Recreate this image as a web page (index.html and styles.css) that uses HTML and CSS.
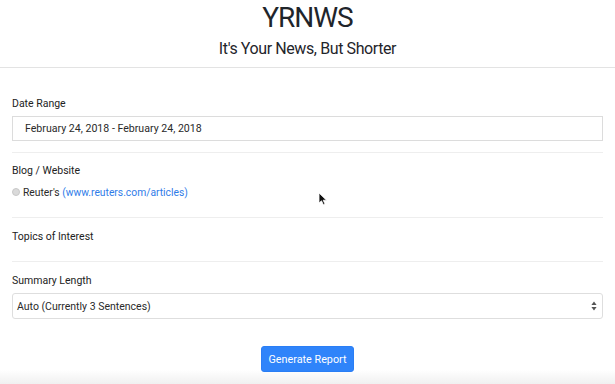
FILE: index.html
```html
<!DOCTYPE html>
<html lang="en">
<head>
    <meta charset="UTF-8">
    <meta name="viewport" content="width=device-width, initial-scale=1.0">
    <title>YRNWS</title>
    <link rel="stylesheet" href="styles.css">
</head>
<body>
    <header class="site-header">
        <h1>YRNWS</h1>
        <p class="tagline">It's Your News, But Shorter</p>
    </header>

    <form class="report-form">
        <div class="field">
            <label class="field-label">Date Range</label>
            <div class="text-input">February 24, 2018 - February 24, 2018</div>
        </div>

        <div class="field field-source">
            <label class="field-label">Blog / Website</label>
            <div class="radio-row">
                <span class="radio"></span>
                <span>Reuter's <a href="#">(www.reuters.com/articles)</a></span>
            </div>
        </div>

        <div class="field field-topics">
            <label class="field-label">Topics of Interest</label>
        </div>

        <div class="field last">
            <label class="field-label">Summary Length</label>
            <div class="select">
                <span>Auto (Currently 3 Sentences)</span>
                <svg class="select-arrows" width="6" height="10" viewBox="0 0 6 10">
                    <path d="M3 0.5 L5.6 4 H0.4 Z M3 9.5 L5.6 6 H0.4 Z" fill="#555"/>
                </svg>
            </div>
        </div>

        <div class="actions">
            <button type="button" class="btn-primary">Generate Report</button>
        </div>
    </form>

    <div class="bottom-shade"></div>

    <svg class="cursor" width="10" height="14" viewBox="0 0 10 14">
        <path d="M1 1 L1 11 L3.5 8.8 L5.4 12.8 L7 12 L5.2 8.2 L8.5 8.2 Z" fill="#111" stroke="#fff" stroke-width="0.8"/>
    </svg>
</body>
</html>
```

FILE: styles.css
```css
body {
    font-family: Roboto, "Liberation Sans", Arial, sans-serif;
    margin: 0;
    color: #222;
    background: #fff;
    height: 384px;
    overflow: hidden;
    position: relative;
}

.site-header {
    text-align: center;
    border-bottom: 1px solid #e3e3e3;
    padding: 2px 0 8px;
}

.site-header h1 {
    font-size: 28px;
    font-weight: 400;
    letter-spacing: -1px;
    margin: 0;
    line-height: 32px;
    color: #1f252b;
}

.tagline {
    font-size: 16px;
    letter-spacing: -0.4px;
    margin: 5px 0 0;
    line-height: 20px;
    color: #1f252b;
}

.report-form {
    padding: 29px 12px 0;
}

.field {
    border-bottom: 1px solid #eeeeee;
    padding-bottom: 11px;
    margin-bottom: 11px;
}

.field-source {
    padding-bottom: 14px;
    margin-bottom: 12px;
}

.field-source .field-label {
    margin-bottom: 3px;
}

.field-topics {
    padding-bottom: 12px;
    margin-bottom: 12px;
}

.field.last {
    border-bottom: none;
    padding-bottom: 0;
    margin-bottom: 0;
}

.field-label {
    display: block;
    font-size: 10.5px;
    line-height: 14px;
    color: #222;
    margin-bottom: 5px;
}

.text-input {
    border: 1px solid #dcdcdc;
    height: 23px;
    line-height: 23px;
    font-size: 10.6px;
    padding-left: 12px;
    color: #2a2a2a;
}

.radio-row {
    display: flex;
    align-items: center;
    gap: 3px;
    font-size: 10.3px;
    height: 22px;
    color: #2a2a2a;
}

.radio {
    width: 6px;
    height: 6px;
    border-radius: 50%;
    background: #dadada;
    border: 1px solid #c8c8c8;
}

.radio-row a {
    color: #2f7ce8;
    text-decoration: none;
}

.select {
    display: flex;
    justify-content: space-between;
    align-items: center;
    border: 1px solid #dedede;
    border-radius: 3px;
    height: 24px;
    padding: 0 5px 0 4px;
    font-size: 10.5px;
    color: #2a2a2a;
}

.actions {
    display: flex;
    justify-content: center;
    padding-top: 27px;
    position: relative;
    z-index: 1;
}

.btn-primary {
    font-family: Roboto, "Liberation Sans", Arial, sans-serif;
    font-size: 10.8px;
    color: #fff;
    background: #2f84fa;
    border: 1px solid #2a7ef5;
    border-radius: 3px;
    width: 93px;
    height: 26px;
    padding: 0;
}

.bottom-shade {
    position: absolute;
    left: 0;
    right: 0;
    bottom: 0;
    height: 14px;
    background: linear-gradient(#fff, #f0f0f0);
}

.cursor {
    position: absolute;
    left: 318px;
    top: 192px;
}
```
